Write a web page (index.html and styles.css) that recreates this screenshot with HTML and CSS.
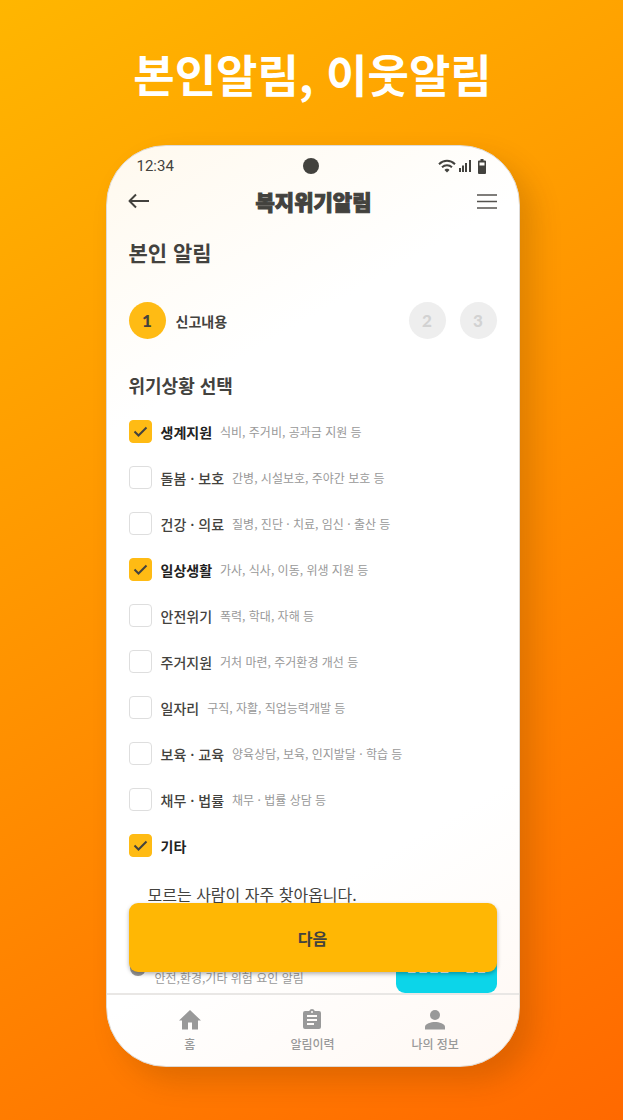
FILE: index.html
```html
<!DOCTYPE html>
<html lang="ko">
<head>
  <meta charset="UTF-8">
  <meta name="viewport" content="width=device-width, initial-scale=1.0">
  <title>복지위기알림</title>
  <link rel="stylesheet" href="styles.css">
</head>
<body>
  <div class="page">
    <h1 class="headline">본인알림, 이웃알림</h1>

    <div class="phone">
      <!-- 상태 표시줄 -->
      <div class="status-bar">
        <span class="time">12:34</span>
        <span class="camera"></span>
        <div class="status-icons">
          <svg width="18" height="14" viewBox="0 0 18 14" fill="none" stroke="#43423e" stroke-width="2">
            <path d="M1 5.200C5.600 .7 12.400 .7 17 5.200M4 8.300c2.900-2.700 7.100-2.700 10 0"/>
            <path d="M9 9.800c-1.100 0-2 .5-2.500 1.100L9 13.400l2.500-2.500C11 10.300 10.100 9.800 9 9.800z" fill="#43423e" stroke="none"/>
          </svg>
          <svg width="12" height="14" viewBox="0 0 12 14" fill="#43423e">
            <path d="M0 9h2v4H0zM3 6.500h2V13H3zM6 4h2v9H6zM10 1h2v12h-2z"/>
          </svg>
          <svg class="battery" width="8" height="15" viewBox="0 0 8 15">
            <path d="M2.500 0h3v1.500H7a1 1 0 0 1 1 1V14a1 1 0 0 1-1 1H1a1 1 0 0 1-1-1V2.500a1 1 0 0 1 1-1h1.500z" fill="#43423e"/>
            <path d="M1.500 3.500h5v3h-5z" fill="#fffdfa"/>
          </svg>
        </div>
      </div>

      <!-- 상단 헤더 -->
      <header class="app-header">
        <button class="icon-button" type="button" aria-label="뒤로">
          <svg width="22" height="16" viewBox="0 0 22 16" fill="none" stroke="#43423e" stroke-width="2" stroke-linejoin="round">
            <path d="M21 8H2M8 1.500L1.500 8 8 14.500"/>
          </svg>
        </button>
        <span class="brand">복지위기알림</span>
        <button class="icon-button" type="button" aria-label="메뉴">
          <svg width="20" height="16" viewBox="0 0 20 16" fill="none" stroke="#55534f" stroke-width="1.600">
            <path d="M0 2h20M0 8.500h20M0 15h20"/>
          </svg>
        </button>
      </header>

      <main class="content">
        <h2 class="page-title">본인 알림</h2>

        <ol class="steps">
          <li class="step current"><span class="circle">1</span><span class="step-name">신고내용</span></li>
          <li class="step"><span class="circle">2</span></li>
          <li class="step"><span class="circle">3</span></li>
        </ol>

        <h3 class="section-title">위기상황 선택</h3>

        <div class="options">
          <label class="option"><input type="checkbox" checked><span class="name">생계지원</span><span class="desc">식비, 주거비, 공과금 지원 등</span></label>
          <label class="option"><input type="checkbox"><span class="name">돌봄 · 보호</span><span class="desc">간병, 시설보호, 주야간 보호 등</span></label>
          <label class="option"><input type="checkbox"><span class="name">건강 · 의료</span><span class="desc">질병, 진단 · 치료, 임신 · 출산 등</span></label>
          <label class="option"><input type="checkbox" checked><span class="name">일상생활</span><span class="desc">가사, 식사, 이동, 위생 지원 등</span></label>
          <label class="option"><input type="checkbox"><span class="name">안전위기</span><span class="desc">폭력, 학대, 자해 등</span></label>
          <label class="option"><input type="checkbox"><span class="name">주거지원</span><span class="desc">거처 마련, 주거환경 개선 등</span></label>
          <label class="option"><input type="checkbox"><span class="name">일자리</span><span class="desc">구직, 자활, 직업능력개발 등</span></label>
          <label class="option"><input type="checkbox"><span class="name">보육 · 교육</span><span class="desc">양육상담, 보육, 인지발달 · 학습 등</span></label>
          <label class="option"><input type="checkbox"><span class="name">채무 · 법률</span><span class="desc">채무 · 법률 상담 등</span></label>
          <label class="option"><input type="checkbox" checked><span class="name">기타</span></label>
        </div>

        <input class="etc-input" type="text" aria-label="기타 내용" value="모르는 사람이 자주 찾아옵니다.">

        <div class="safety">
          <span class="dot"></span>
          <p class="safety-text">안전,환경,기타 위험 요인 알림</p>
          <button class="safety-button" type="button">안전신문고 알림</button>
        </div>

        <!-- 내용 위에 떠 있는 버튼 -->
        <button class="next-button" type="button">다음</button>
      </main>

      <!-- 하단 탭 -->
      <nav class="tab-bar">
        <a href="#home">
          <svg width="24" height="24" viewBox="0 0 24 24"><path d="M10 21.500v-7h4v7h6v-9h3L12 2 1 12.500h3v9z"/></svg>
          <span>홈</span>
        </a>
        <a href="#history">
          <svg width="24" height="24" viewBox="0 0 24 24"><path d="M19 3h-4.200a3 3 0 0 0-5.600 0H5a2 2 0 0 0-2 2v14a2 2 0 0 0 2 2h14a2 2 0 0 0 2-2V5a2 2 0 0 0-2-2zm-7 0a1 1 0 1 1 0 2 1 1 0 0 1 0-2zm2 14H7v-2h7zm3-4H7v-2h10zm0-4H7V7h10z"/></svg>
          <span>알림이력</span>
        </a>
        <a href="#me">
          <svg width="24" height="24" viewBox="0 0 24 24"><circle cx="12" cy="7" r="5"/><path d="M2 21.500V19c0-3.300 6-5 10-5s10 1.700 10 5v2.500z"/></svg>
          <span>나의 정보</span>
        </a>
      </nav>
    </div>
  </div>
</body>
</html>
```
FILE: styles.css
```css
* {
  margin: 0;
  padding: 0;
  box-sizing: border-box;
}
body {
  font-family: "Noto Sans CJK KR", sans-serif;
  color: #43423e;
}
button, input {
  font: inherit;
  color: inherit;
  border: none;
  background: none;
}
button {
  cursor: pointer;
}
.page {
  min-height: 100vh;
  padding: 39px 24px 54px 26px;
  background: linear-gradient(150deg, #ffb600 0%, #ff9000 50%, #ff6900 100%);
}
.headline {
  margin-bottom: 36px;
  font-size: 45px;
  font-weight: 700;
  line-height: 70px;
  text-align: center;
  color: #fff;
}

/* 휴대폰 화면 */
.phone {
  max-width: 414px;
  margin: 0 auto;
  border: 1px solid #dedad5;
  border-radius: 60px;
  overflow: hidden;
  background: linear-gradient(150deg, #fff9ee 0%, #fff 25%, #fff 75%, #fff8f3 100%);
  box-shadow: 14px 14px 28px rgba(80, 40, 0, 0.18);
}
.status-bar {
  display: grid;
  grid-template-columns: 1fr auto 1fr;
  align-items: center;
  height: 40px;
  padding: 0 33px 0 30px;
}
.time {
  font-family: Roboto, sans-serif;
  font-size: 15px;
}
.camera {
  width: 16px;
  height: 16px;
  border-radius: 50%;
  background: #43423e;
}
.status-icons {
  display: flex;
  justify-content: flex-end;
  align-items: center;
  gap: 3px;
}
.battery {
  margin-left: 4px;
}
.app-header {
  display: flex;
  justify-content: space-between;
  align-items: center;
  height: 30px;
  padding: 0 21px;
}
.icon-button {
  display: flex;
}
.brand {
  font-size: 21px;
  font-weight: 900;
  line-height: 30px;
  -webkit-text-stroke: 1px #43423e;
}

/* 본문 */
.content {
  position: relative;
  padding: 20px 22px 0;
}
.page-title {
  font-size: 21px;
  font-weight: 700;
  line-height: 32px;
}
.steps {
  display: flex;
  gap: 14px;
  margin-top: 34px;
  list-style: none;
}
.step {
  display: flex;
  align-items: center;
  gap: 10px;
}
.step.current {
  flex: 1;
}
.circle {
  width: 37px;
  height: 37px;
  border-radius: 50%;
  background: #eee;
  color: #d2d2d2;
  font-family: Lato, sans-serif;
  font-size: 17px;
  font-weight: 900;
  line-height: 37px;
  text-align: center;
}
.current .circle {
  background: #ffbb14;
  color: #43423e;
}
.step-name {
  font-size: 14px;
  font-weight: 700;
}
.section-title {
  margin-top: 32px;
  font-size: 18px;
  font-weight: 700;
  line-height: 28px;
}
.options {
  display: flex;
  flex-direction: column;
  gap: 23px;
  margin-top: 21px;
}
.option {
  display: flex;
  align-items: center;
  height: 23px;
  white-space: nowrap;
  cursor: pointer;
}
.option input {
  appearance: none;
  width: 23px;
  height: 23px;
  margin-right: 9px;
  border: 1px solid #dedede;
  border-radius: 4px;
  background: #fff;
}
.option input:checked {
  border-color: #ffbb14;
  background: #ffbb14 url("data:image/svg+xml,%3Csvg xmlns='http://www.w3.org/2000/svg' viewBox='0 0 21 21'%3E%3Cpath d='M4.500 10.500l4 4 8-8' fill='none' stroke='%2343423e' stroke-width='2'/%3E%3C/svg%3E") center / 100% no-repeat;
}
.name {
  margin-right: 8px;
  font-size: 14px;
  font-weight: 500;
  line-height: 22px;
}
.option input:checked + .name {
  font-weight: 700;
  color: #222;
}
.desc {
  font-size: 12px;
  color: #999;
}
.etc-input {
  display: block;
  width: 100%;
  height: 36px;
  margin-top: 19px;
  padding: 0 19px;
  font-size: 16px;
}
.safety {
  display: flex;
  align-items: flex-end;
  margin-top: 31px;
}
.dot {
  width: 16px;
  height: 16px;
  margin: 0 9px 17px 1px;
  border-radius: 50%;
  background: #999;
}
.safety-text {
  flex: 1;
  padding-bottom: 5px;
  font-size: 12px;
  line-height: 20px;
  color: #999;
}
.safety-button {
  width: 101px;
  height: 50px;
  padding-bottom: 4px;
  border-radius: 9px;
  background: #0cd5e9;
  color: #fff;
  font-size: 12px;
  font-weight: 500;
}
.next-button {
  position: absolute;
  right: 22px;
  bottom: 21px;
  left: 22px;
  height: 69px;
  border-radius: 9px;
  background: #ffb704;
  box-shadow: 0 2px 4px rgba(0, 0, 0, 0.3);
  font-size: 16px;
  font-weight: 700;
}

/* 하단 탭 */
.tab-bar {
  display: grid;
  grid-template-columns: repeat(3, 1fr);
  height: 73px;
  padding: 13px 22px 0;
  border-top: 2px solid #e9e7e5;
}
.tab-bar a {
  display: flex;
  flex-direction: column;
  align-items: center;
  gap: 2px;
  font-size: 12px;
  font-weight: 500;
  line-height: 20px;
  color: #999;
  text-decoration: none;
}
.tab-bar svg {
  fill: #999;
}
```
